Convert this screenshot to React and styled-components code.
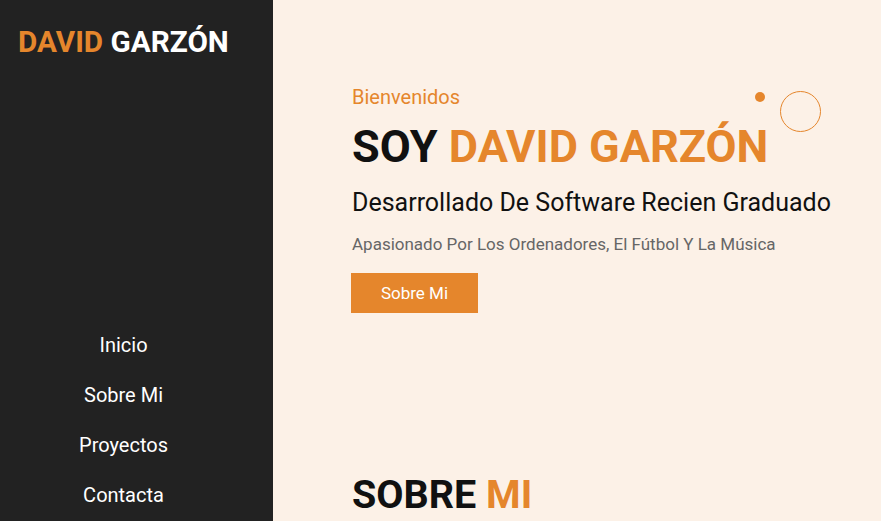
import React from 'react';
import styled, { createGlobalStyle } from 'styled-components';

const GlobalStyle = createGlobalStyle`
  html, body {
    margin: 0;
    padding: 0;
    height: 100%;
    overflow: hidden;
    font-family: Roboto, "Liberation Sans", sans-serif;
  }
  * { box-sizing: border-box; }
`;

const orange = '#e5862c';

const Layout = styled.div`
  display: flex;
  height: 100vh;
  background-color: #fcf1e7;
`;

const Sidebar = styled.aside`
  width: 273px;
  flex-shrink: 0;
  background-color: #222222;
  display: flex;
  flex-direction: column;
  padding: 25px 0 0 18px;
`;

const Logo = styled.h1`
  margin: 0;
  font-size: 29.7px;
  line-height: 34px;
  font-weight: 700;
  color: white;
  white-space: nowrap;
  span { color: ${orange}; }
`;

const Nav = styled.ul`
  list-style: none;
  margin: 274px 0 0 0;
  padding: 0 44px 0 0;
  display: flex;
  flex-direction: column;
  align-items: center;
  gap: 26px;
`;

const NavItem = styled.li`
  font-size: 20px;
  line-height: 24px;
  color: white;
  cursor: pointer;
`;

const Main = styled.main`
  flex: 1;
  padding: 85px 0 0 79px;
`;

const Hero = styled.section`
  position: relative;
  display: flex;
  flex-direction: column;
  align-items: flex-start;
`;

const Greeting = styled.p`
  margin: 0;
  font-size: 20px;
  line-height: 24px;
  color: ${orange};
`;

const Title = styled.h2`
  margin: ${p => p.$top || 0}px 0 0 0;
  font-size: ${p => p.$size}px;
  line-height: ${p => p.$line}px;
  font-weight: 700;
  color: #111111;
  white-space: nowrap;
  span { color: ${orange}; }
`;

const Subtitle = styled.h3`
  margin: 15px 0 0 0;
  font-size: 25px;
  line-height: 30px;
  font-weight: 400;
  color: #111111;
  white-space: nowrap;
`;

const Text = styled.p`
  margin: 16px 0 0 0;
  font-size: 17px;
  line-height: 20px;
  color: #666666;
  white-space: nowrap;
`;

const Button = styled.button`
  margin: 19px 0 0 -1px;
  height: 40px;
  width: 127px;
  border: none;
  outline: none;
  background-color: ${orange};
  color: white;
  font-family: inherit;
  font-size: 17px;
  cursor: pointer;
`;

const Dot = styled.span`
  position: absolute;
  left: 403px;
  top: 7px;
  width: 10px;
  height: 10px;
  border-radius: 50%;
  background-color: ${orange};
`;

const Ring = styled.span`
  position: absolute;
  left: 428px;
  top: 6px;
  width: 41px;
  height: 41px;
  border-radius: 50%;
  border: 1px solid ${orange};
`;

export default function App() {
  return (
    <>
      <GlobalStyle />
      <Layout>
        <Sidebar>
          <Logo><span>DAVID</span> GARZÓN</Logo>
          <Nav>
            <NavItem>Inicio</NavItem>
            <NavItem>Sobre Mi</NavItem>
            <NavItem>Proyectos</NavItem>
            <NavItem>Contacta</NavItem>
          </Nav>
        </Sidebar>
        <Main>
          <Hero>
            <Dot />
            <Ring />
            <Greeting>Bienvenidos</Greeting>
            <Title $top={11} $size={45} $line={53}>SOY <span>DAVID GARZÓN</span></Title>
            <Subtitle>Desarrollado De Software Recien Graduado</Subtitle>
            <Text>Apasionado Por Los Ordenadores, El Fútbol Y La Música</Text>
            <Button>Sobre Mi</Button>
          </Hero>
          <Title $top={159} $size={39.5} $line={46}>SOBRE <span>MI</span></Title>
        </Main>
      </Layout>
    </>
  );
}
